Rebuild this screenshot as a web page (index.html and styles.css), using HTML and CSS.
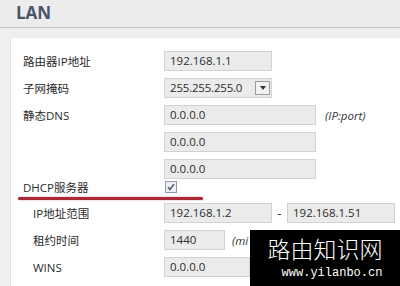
FILE: index.html
```html
<!DOCTYPE html>
<html lang="zh">

<head>
    <meta charset="UTF-8">
    <meta name="viewport" content="width=device-width, initial-scale=1.0">
    <title>LAN</title>
    <link rel="stylesheet" href="styles.css">
</head>

<body>
    <div class="cabecera">LAN</div>

    <div class="panel">
        <div class="fila">
            <span class="etiqueta">路由器IP地址</span>
            <span class="campo corto">192.168.1.1</span>
        </div>
        <div class="fila">
            <span class="etiqueta">子网掩码</span>
            <span class="campo corto selector">255.255.255.0
                <span class="boton-flecha">
                    <svg width="6" height="4" viewBox="0 0 6 4"><path d="M0 0h6L3 4z" fill="#333"/></svg>
                </span>
            </span>
        </div>
        <div class="fila">
            <span class="etiqueta">静态DNS</span>
            <span class="campo largo">0.0.0.0</span>
            <span class="nota">(IP:port)</span>
        </div>
        <div class="fila">
            <span class="etiqueta"></span>
            <span class="campo largo">0.0.0.0</span>
        </div>
        <div class="fila">
            <span class="etiqueta"></span>
            <span class="campo largo">0.0.0.0</span>
        </div>
        <div class="fila fila-dhcp">
            <span class="etiqueta">DHCP服务器</span>
            <span class="casilla">
                <svg width="12" height="12" viewBox="0 0 12 12">
                    <rect x="0.5" y="0.5" width="11" height="11" fill="#eef0f4" stroke="#8d99ab"/>
                    <path d="M3 6l2 2.5L9 3" fill="none" stroke="#4d5a70" stroke-width="1.4"/>
                </svg>
            </span>
        </div>
        <div class="subrayado"></div>
        <div class="fila sub">
            <span class="etiqueta">IP地址范围</span>
            <span class="campo corto">192.168.1.2</span>
            <span class="guion">-</span>
            <span class="campo corto">192.168.1.51</span>
        </div>
        <div class="fila sub">
            <span class="etiqueta">租约时间</span>
            <span class="campo mini">1440</span>
            <!-- lo demás queda tapado por la marca de agua -->
            <span class="nota nota-cortada">(mi</span>
        </div>
        <div class="fila sub">
            <span class="etiqueta">WINS</span>
            <span class="campo hasta-marca">0.0.0.0</span>
        </div>
    </div>

    <div class="marca">
        <div class="marca-titulo">路由知识网</div>
        <div class="marca-web">www.yilanbo.cn</div>
    </div>
</body>

</html>
```

FILE: styles.css
```css
body {
    font-family: "Open Sans", "Noto Sans CJK SC", sans-serif;
    background-color: #efefef;
    color: #2b2b2b;
    margin: 0;
    height: 286px;
    overflow: hidden;
    position: relative;
}

.cabecera {
    height: 27px;
    padding-left: 16px;
    font-size: 17px;
    font-weight: bold;
    line-height: 25px;
    color: #47546b;
    border-bottom: 1px solid #c6c6c6;
    background-color: #ececec;
}

.panel {
    margin: 9px 0 0 10px;
    padding: 13px 0 3px 12px;
    background-color: #fff;
    border-left: 1px solid #e2e2e2;
    border-top: 1px solid #ececec;
}

.fila {
    display: flex;
    align-items: center;
    height: 20px;
    margin-bottom: 7px;
}

.etiqueta {
    width: 141px;
    flex-shrink: 0;
    font-size: 11.5px;
}

.sub .etiqueta {
    width: 131px;
    padding-left: 10px;
}

.campo {
    box-sizing: border-box;
    height: 20px;
    padding-left: 5px;
    font-size: 11.5px;
    line-height: 18px;
    white-space: nowrap;
    overflow: hidden;
    background-color: #ebebeb;
    border: 1px solid #d2d2d2;
}

.corto {
    width: 108px;
}

.largo {
    width: 152px;
}

.mini {
    width: 61px;
}

.hasta-marca {
    width: 86px;
}

.selector {
    display: flex;
    justify-content: space-between;
    padding-right: 1px;
    letter-spacing: -0.2px;
}

.boton-flecha {
    display: flex;
    align-items: center;
    justify-content: center;
    width: 13px;
    height: 12px;
    margin-top: 2px;
    background-color: #f2f2f2;
    border: 1px solid #9a9a9a;
}

.nota {
    margin-left: 9px;
    font-size: 11.5px;
    font-style: italic;
    color: #333;
}

.nota-cortada {
    margin-left: 7px;
}

.guion {
    width: 15px;
    text-align: center;
    font-size: 12px;
}

.fila-dhcp {
    height: 14px;
    margin-top: -6px;
    margin-bottom: 0;
}

.casilla {
    display: flex;
    margin-left: 1px;
}

.subrayado {
    width: 185px;
    height: 3px;
    margin: 3px 0 3px -5px;
    border-radius: 2px;
    background-color: #a92a36;
    box-shadow: 0 0 2px rgba(169, 42, 54, 0.5);
}

.marca {
    position: absolute;
    right: 0;
    bottom: 0;
    width: 150px;
    height: 56px;
    background-color: #000;
    color: #fff;
    text-align: center;
}

.marca-titulo {
    font-family: "Noto Sans CJK SC", sans-serif;
    font-size: 23px;
    font-weight: 300;
    line-height: 26px;
    margin-top: 5px;
}

.marca-web {
    font-family: "Liberation Mono", monospace;
    font-size: 12px;
    line-height: 14px;
    margin-top: 5px;
    padding-left: 14px;
}
```
